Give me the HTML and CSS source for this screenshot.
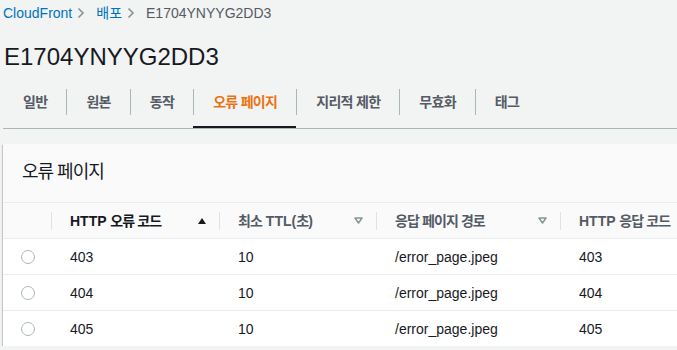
FILE: index.html
```html
<!DOCTYPE html>
<html lang="ko">
<head>
    <meta charset="UTF-8">
    <meta name="viewport" content="width=device-width, initial-scale=1.0">
    <title>E1704YNYYG2DD3 | CloudFront</title>
    <link rel="stylesheet" href="styles.css">
</head>
<body>
    <div class="page">
        <nav class="breadcrumbs">
            <a href="#">CloudFront</a>
            <svg class="crumb-sep" width="8" height="12" viewBox="0 0 8 12"><path d="M1.5 1.5 L6 6 L1.5 10.5" fill="none" stroke="#879596" stroke-width="1.6"/></svg>
            <a href="#">배포</a>
            <svg class="crumb-sep" width="8" height="12" viewBox="0 0 8 12"><path d="M1.5 1.5 L6 6 L1.5 10.5" fill="none" stroke="#879596" stroke-width="1.6"/></svg>
            <span class="current">E1704YNYYG2DD3</span>
        </nav>

        <h1 class="title">E1704YNYYG2DD3</h1>

        <div class="tabs">
            <div class="tab"><span class="tab-label">일반</span></div>
            <div class="tab"><span class="tab-label">원본</span></div>
            <div class="tab"><span class="tab-label">동작</span></div>
            <div class="tab active"><span class="tab-label">오류 페이지</span></div>
            <div class="tab"><span class="tab-label">지리적 제한</span></div>
            <div class="tab"><span class="tab-label">무효화</span></div>
            <div class="tab"><span class="tab-label">태그</span></div>
        </div>

        <div class="panel">
            <div class="panel-header">
                <h2>오류 페이지</h2>
            </div>
            <table class="pages-table">
                <colgroup>
                    <col class="col-select">
                    <col class="col-code">
                    <col class="col-ttl">
                    <col class="col-path">
                    <col class="col-resp">
                </colgroup>
                <thead>
                    <tr>
                        <th></th>
                        <th>
                            <div class="th-inner sorted">
                                <span>HTTP <span class="ko">오류 코드</span></span>
                                <svg width="8" height="6" viewBox="0 0 8 6"><path d="M0 6 L4 0 L8 6 Z" fill="#16191f"/></svg>
                            </div>
                        </th>
                        <th>
                            <div class="th-inner">
                                <span><span class="ko">최소</span> TTL(<span class="ko">초</span>)</span>
                                <svg width="9" height="7" viewBox="0 0 9 7"><path d="M1 1 H8 L4.5 6 Z" fill="none" stroke="#879596" stroke-width="1.5" stroke-linejoin="round"/></svg>
                            </div>
                        </th>
                        <th>
                            <div class="th-inner">
                                <span class="ko">응답 페이지 경로</span>
                                <svg width="9" height="7" viewBox="0 0 9 7"><path d="M1 1 H8 L4.5 6 Z" fill="none" stroke="#879596" stroke-width="1.5" stroke-linejoin="round"/></svg>
                            </div>
                        </th>
                        <th>
                            <div class="th-inner">
                                <span>HTTP <span class="ko">응답 코드</span></span>
                            </div>
                        </th>
                    </tr>
                </thead>
                <tbody>
                    <tr>
                        <td><span class="radio"></span></td>
                        <td>403</td>
                        <td>10</td>
                        <td>/error_page.jpeg</td>
                        <td>403</td>
                    </tr>
                    <tr>
                        <td><span class="radio"></span></td>
                        <td>404</td>
                        <td>10</td>
                        <td>/error_page.jpeg</td>
                        <td>404</td>
                    </tr>
                    <tr>
                        <td><span class="radio"></span></td>
                        <td>405</td>
                        <td>10</td>
                        <td>/error_page.jpeg</td>
                        <td>405</td>
                    </tr>
                </tbody>
            </table>
        </div>
    </div>
</body>
</html>
```

FILE: styles.css
```css
html, body {
    margin: 0;
    overflow: hidden;
}

body {
    background-color: #f2f3f3;
    color: #16191f;
    font-family: "Liberation Sans", "Noto Sans CJK KR", sans-serif;
    font-size: 14px;
}

.ko {
    letter-spacing: -0.9px;
}

.page {
    padding-left: 3px;
}

/* breadcrumbs */
.breadcrumbs {
    display: flex;
    align-items: center;
    padding-top: 3px;
    line-height: 20px;
}

.breadcrumbs a {
    color: #0073bb;
    text-decoration: none;
}

.crumb-sep {
    margin: 0 11px 0 5px;
}

.breadcrumbs .current {
    color: #545b64;
}

.title {
    margin: 19px 0 0 1px;
    font-size: 24px;
    font-weight: 400;
    line-height: 30px;
}

/* tabs */
.tabs {
    display: flex;
    margin-top: 4px;
    border-bottom: 1px solid #aab7b8;
}

.tab {
    padding: 13px 0 11px;
    border-bottom: 2px solid transparent;
}

.tab-label {
    display: block;
    padding: 4px 19px;
    border-left: 1px solid #aab7b8;
    line-height: 18px;
    color: #545b64;
    font-weight: 700;
    letter-spacing: -0.7px;
}

.tab:first-child .tab-label {
    border-left-color: transparent;
}

.tab.active {
    border-bottom-color: #16191f;
}

.tab.active .tab-label {
    color: #ec7211;
}

/* panel */
.panel {
    width: 757px;
    margin-top: 15px;
    background-color: #fff;
    box-shadow: 0 1px 1px 0 rgba(0, 28, 36, 0.3), 1px 1px 1px 0 rgba(0, 28, 36, 0.15), -1px 1px 1px 0 rgba(0, 28, 36, 0.15);
}

.panel-header {
    padding: 17px 20px 19px 19px;
    background-color: #fafafa;
    border-bottom: 1px solid #eaeded;
}

.panel-header h2 {
    margin: 0;
    font-size: 18px;
    font-weight: 400;
    line-height: 22px;
    letter-spacing: -1px;
}

.pages-table {
    width: 100%;
    table-layout: fixed;
    border-collapse: collapse;
}

.col-select { width: 48px; }
.col-code { width: 168px; }
.col-ttl { width: 157px; }
.col-path { width: 184px; }

.pages-table th {
    height: 35px;
    padding: 0;
    background-color: #fafafa;
    border-bottom: 1px solid #eaeded;
    color: #545b64;
    font-weight: 700;
    text-align: left;
}

.th-inner {
    display: flex;
    align-items: center;
    justify-content: space-between;
    padding: 0 13px 0 18px;
    border-left: 1px solid #dfe2e2;
    line-height: 18px;
    white-space: nowrap;
}

.th-inner.sorted {
    color: #16191f;
}

.pages-table td {
    height: 35px;
    padding: 0 0 0 19px;
    border-bottom: 1px solid #eaeded;
    line-height: 18px;
}

.pages-table tbody tr:last-child td {
    border-bottom: none;
}

.pages-table td:first-child {
    padding-left: 18px;
}

.radio {
    display: block;
    width: 12px;
    height: 12px;
    border: 1px solid #aab7b8;
    border-radius: 50%;
    background-color: #fff;
}
```
